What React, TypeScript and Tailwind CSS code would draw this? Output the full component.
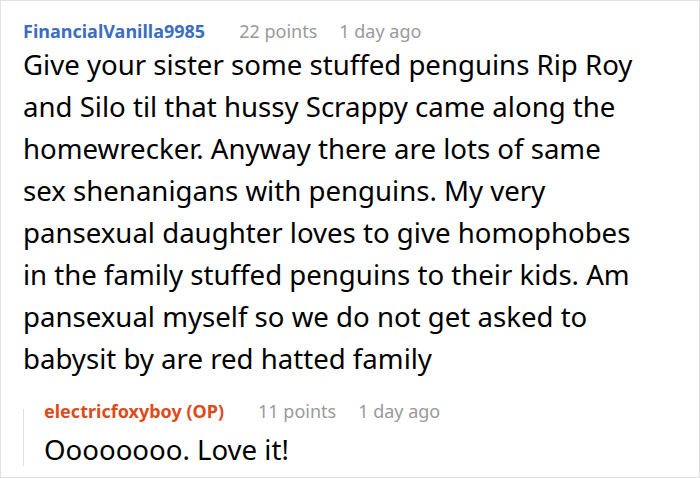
import React from 'react';

const font = { fontFamily: '"Noto Sans", "Open Sans", sans-serif' };

const lines = [
  'Give your sister some stuffed penguins Rip Roy',
  'and Silo til that hussy Scrappy came along the',
  'homewrecker. Anyway there are lots of same',
  'sex shenanigans with penguins. My very',
  'pansexual daughter loves to give homophobes',
  'in the family stuffed penguins to their kids. Am',
  'pansexual myself so we do not get asked to',
  'babysit by are red hatted family',
];

function Meta({ name, color, points }: { name: string; color: string; points: number }) {
  return (
    <div className="flex items-center h-[24px] text-[18px] leading-[24px] whitespace-nowrap">
      <span className={`font-bold ${color}`}>{name}</span>
      <span className="ml-[34px] text-[#9a9a9a]">{points} points</span>
      <span className="ml-[22px] text-[#9a9a9a]">1 day ago</span>
    </div>
  );
}

export default function App() {
  return (
    <div
      className="w-[700px] h-[478px] bg-white border border-[#e2e2e2] pl-[22px] pr-[8px] pt-[18px] text-black overflow-hidden"
      style={font}
    >
      <Meta name="FinancialVanilla9985" color="text-[#3c6ebf]" points={22} />
      <p className="text-[27.6px] leading-[42px] whitespace-nowrap">
        {lines.map((l) => (
          <span key={l} className="block">
            {l}
          </span>
        ))}
      </p>
      <div className="flex mt-[20px]">
        <div className="w-px bg-[#e0e0e0] mt-[10px] mb-[4px]" />
        <div className="pl-[20px]">
          <Meta name="electricfoxyboy (OP)" color="text-[#dd4b1a]" points={11} />
          <p className="mt-[5px] text-[27.6px] leading-[42px]">Oooooooo. Love it!</p>
        </div>
      </div>
    </div>
  );
}
